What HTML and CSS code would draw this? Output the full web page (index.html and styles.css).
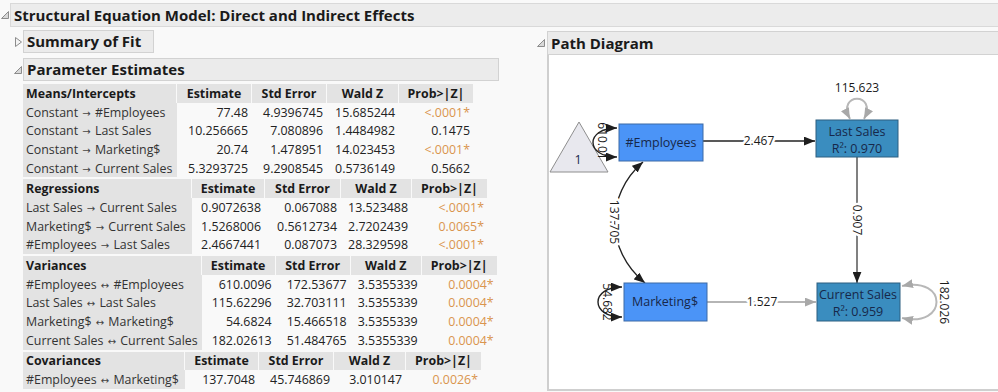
FILE: index.html
```html
<!DOCTYPE html>
<html lang="en">
<head>
  <meta charset="UTF-8" />
  <title>Structural Equation Model</title>
  <link rel="stylesheet" href="styles.css">
</head>
<body>
  <div class="report">
    <!-- Report title -->
    <div class="title-row">
      <span class="disc"><svg width="8" height="8" viewBox="0 0 8 8"><polygon points="7.5,0.5 7.5,7.5 0.5,7.5" class="icon-open"/></svg></span>
      <div class="title-bar">Structural Equation Model: Direct and Indirect Effects</div>
    </div>

    <div class="cols">
      <!-- Left side: fit summary and estimates -->
      <div class="left">
        <div class="outline-row">
          <span class="disc"><svg width="7" height="10" viewBox="0 0 7 10"><polygon points="0.5,0.5 6.5,5 0.5,9.5" class="icon-closed"/></svg></span>
          <div class="outline-head summary">Summary of Fit</div>
        </div>

        <div class="outline-row gap-top">
          <span class="disc"><svg width="8" height="8" viewBox="0 0 8 8"><polygon points="7.5,0.5 7.5,7.5 0.5,7.5" class="icon-open"/></svg></span>
          <div class="outline-head estimates">Parameter Estimates</div>
        </div>

        <div class="tables">
          <table class="est means">
            <colgroup><col><col><col><col><col></colgroup>
            <tr><th>Means/Intercepts</th><th>Estimate</th><th>Std Error</th><th>Wald Z</th><th>Prob&gt;|Z|</th></tr>
            <tr><td class="label">Constant <span class="arr">→</span> #Employees</td><td>77.48</td><td>4.9396745</td><td>15.685244</td><td class="sig">&lt;.0001*</td></tr>
            <tr><td class="label">Constant <span class="arr">→</span> Last Sales</td><td>10.256665</td><td>7.080896</td><td>1.4484982</td><td>0.1475</td></tr>
            <tr><td class="label">Constant <span class="arr">→</span> Marketing$</td><td>20.74</td><td>1.478951</td><td>14.023453</td><td class="sig">&lt;.0001*</td></tr>
            <tr><td class="label">Constant <span class="arr">→</span> Current Sales</td><td>5.3293725</td><td>9.2908545</td><td>0.5736149</td><td>0.5662</td></tr>
          </table>

          <table class="est regress">
            <colgroup><col><col><col><col><col></colgroup>
            <tr><th>Regressions</th><th>Estimate</th><th>Std Error</th><th>Wald Z</th><th>Prob&gt;|Z|</th></tr>
            <tr><td class="label">Last Sales <span class="arr">→</span> Current Sales</td><td>0.9072638</td><td>0.067088</td><td>13.523488</td><td class="sig">&lt;.0001*</td></tr>
            <tr><td class="label">Marketing$ <span class="arr">→</span> Current Sales</td><td>1.5268006</td><td>0.5612734</td><td>2.7202439</td><td class="sig">0.0065*</td></tr>
            <tr><td class="label">#Employees <span class="arr">→</span> Last Sales</td><td>2.4667441</td><td>0.087073</td><td>28.329598</td><td class="sig">&lt;.0001*</td></tr>
          </table>

          <table class="est variances">
            <colgroup><col><col><col><col><col></colgroup>
            <tr><th>Variances</th><th>Estimate</th><th>Std Error</th><th>Wald Z</th><th>Prob&gt;|Z|</th></tr>
            <tr><td class="label">#Employees <span class="arr">↔</span> #Employees</td><td>610.0096</td><td>172.53677</td><td>3.5355339</td><td class="sig">0.0004*</td></tr>
            <tr><td class="label">Last Sales <span class="arr">↔</span> Last Sales</td><td>115.62296</td><td>32.703111</td><td>3.5355339</td><td class="sig">0.0004*</td></tr>
            <tr><td class="label">Marketing$ <span class="arr">↔</span> Marketing$</td><td>54.6824</td><td>15.466518</td><td>3.5355339</td><td class="sig">0.0004*</td></tr>
            <tr><td class="label">Current Sales <span class="arr">↔</span> Current Sales</td><td>182.02613</td><td>51.484765</td><td>3.5355339</td><td class="sig">0.0004*</td></tr>
          </table>

          <table class="est covar">
            <colgroup><col><col><col><col><col></colgroup>
            <tr><th>Covariances</th><th>Estimate</th><th>Std Error</th><th>Wald Z</th><th>Prob&gt;|Z|</th></tr>
            <tr><td class="label">#Employees <span class="arr">↔</span> Marketing$</td><td>137.7048</td><td>45.746869</td><td>3.010147</td><td class="sig">0.0026*</td></tr>
          </table>
        </div>
      </div>

      <!-- Right side: path diagram -->
      <div class="right">
        <div class="outline-row">
          <span class="disc wide"><svg width="8" height="8" viewBox="0 0 8 8"><polygon points="7.5,0.5 7.5,7.5 0.5,7.5" class="icon-open"/></svg></span>
          <div class="outline-head diagram-head">Path Diagram</div>
        </div>
        <div class="diagram">
          <svg width="451" height="334" viewBox="547 55 451 334">
            <defs>
              <marker id="arrow" viewBox="0 0 10 8" refX="10" refY="4" markerWidth="11" markerHeight="9" markerUnits="userSpaceOnUse" orient="auto-start-reverse">
                <path d="M0,0 L10,4 L0,8 z" fill="#1e1e1e"/>
              </marker>
              <marker id="arrow-grey" viewBox="0 0 10 8" refX="10" refY="4" markerWidth="11" markerHeight="9" markerUnits="userSpaceOnUse" orient="auto-start-reverse">
                <path d="M0,0 L10,4 L0,8 z" fill="#a8a8a8"/>
              </marker>
            </defs>

            <!-- constant -->
            <polygon class="const" points="579,122 550,172 608,172"/>
            <text class="node-text" x="578" y="164">1</text>

            <!-- edges -->
            <path class="edge" d="M617,128 C585,128 585,157 617,157" marker-start="url(#arrow)" marker-end="url(#arrow)"/>
            <text class="edge-text" transform="translate(602,141) rotate(90)">610.01</text>

            <path class="edge" d="M703,141 L815,141" marker-end="url(#arrow)"/>
            <text class="edge-text halo" x="759" y="145">2.467</text>

            <path class="loop" d="M850,119 C836,92 878,92 864,119" marker-start="url(#arrow-grey)" marker-end="url(#arrow-grey)"/>
            <text class="edge-text" x="857" y="92">115.623</text>

            <path class="edge dim" d="M857,157 L857,283" marker-end="url(#arrow)"/>
            <text class="edge-text halo" transform="translate(857,220) rotate(90)">0.907</text>

            <path class="edge" d="M643,162 C605,195 605,250 645,283" marker-start="url(#arrow)" marker-end="url(#arrow)"/>
            <text class="edge-text halo" transform="translate(614,222) rotate(90)">137.705</text>

            <path class="edge" d="M622,287 C590,287 590,317 622,317" marker-start="url(#arrow)" marker-end="url(#arrow)"/>
            <text class="edge-text" transform="translate(607,302) rotate(90)">54.682</text>

            <path class="edge grey" d="M707,302 L816,302" marker-end="url(#arrow-grey)"/>
            <text class="edge-text halo" x="762" y="306">1.527</text>

            <path class="loop" d="M902,286 C948,276 948,328 902,318" marker-start="url(#arrow-grey)" marker-end="url(#arrow-grey)"/>
            <text class="edge-text" transform="translate(944,302) rotate(90)">182.026</text>

            <!-- nodes -->
            <rect class="node-x" x="619" y="124" width="84" height="37"/>
            <text class="node-text" x="661" y="147">#Employees</text>

            <rect class="node-x" x="624" y="283" width="83" height="38"/>
            <text class="node-text" x="665" y="306">Marketing$</text>

            <rect class="node-y" x="816" y="120" width="82" height="37"/>
            <text class="node-text" x="857" y="136">Last Sales</text>
            <text class="node-text" x="857" y="153">R²: 0.970</text>

            <rect class="node-y" x="817" y="283" width="83" height="38"/>
            <text class="node-text" x="858" y="299">Current Sales</text>
            <text class="node-text" x="858" y="316">R²: 0.959</text>
          </svg>
        </div>
      </div>
    </div>
  </div>
</body>
</html>
```

FILE: styles.css
```css
body {
  margin: 0;
  background-color: #f9f9f9;
  font-family: "Open Sans", Arial, sans-serif;
  color: #1a1a1a;
}

.report {
  width: 998px;
  overflow: hidden;
}

/* disclosure icons */
.disc {
  display: flex;
  justify-content: center;
  align-items: center;
  flex: none;
  width: 10px;
}

.disc.wide {
  width: 17px;
  justify-content: flex-end;
  padding-right: 2px;
  box-sizing: border-box;
}

.icon-open {
  fill: #d8d8d8;
  stroke: #8c8c8c;
  stroke-width: 1;
}

.icon-closed {
  fill: #f4f4f4;
  stroke: #8c8c8c;
  stroke-width: 1;
}

.title-row {
  display: flex;
  align-items: center;
  margin-top: 3px;
}

.title-bar {
  flex: 1;
  height: 22px;
  line-height: 22px;
  padding-left: 3px;
  background-color: #ececec;
  border: 1px solid #d9d9d9;
  border-right: none;
  font-size: 15px;
  font-weight: bold;
}

.cols {
  display: flex;
  margin-top: 3px;
}

.left {
  width: 517px;
  padding-left: 13px;
  flex: none;
}

.right {
  flex: 1;
  padding-top: 1px;
}

.outline-row {
  display: flex;
  align-items: center;
}

.gap-top {
  margin-top: 5px;
}

.outline-head {
  height: 21px;
  line-height: 21px;
  padding-left: 3px;
  background-color: #ebebeb;
  border: 1px solid #d2d2d2;
  font-size: 15px;
  font-weight: bold;
}

.summary {
  width: 126px;
}

.estimates {
  width: 471px;
}

.diagram-head {
  flex: 1;
  height: 22px;
  line-height: 22px;
  border-right: none;
}

/* estimate tables */
.tables {
  margin-top: 3px;
  margin-left: 10px;
}

table.est {
  border-collapse: separate;
  border-spacing: 0;
  table-layout: fixed;
  font-size: 12.4px;
  margin-bottom: 2px;
}

.est th {
  height: 18.7px;
  padding: 0;
  background-color: #e3e3e3;
  border-right: 1px solid #f9f9f9;
  font-weight: bold;
  text-align: center;
  white-space: nowrap;
}

.est th:first-child {
  text-align: left;
  padding-left: 3px;
}

.est td {
  height: 18.7px;
  padding: 0 4px 0 0;
  text-align: right;
  white-space: nowrap;
  color: #222;
}

.est td.label {
  background-color: #e3e3e3;
  text-align: left;
  padding-left: 3px;
  color: #333;
  overflow: hidden;
}

.est td.sig {
  color: #d9954e;
}

.arr {
  font-family: "DejaVu Sans", sans-serif;
  font-size: 10px;
  color: #444;
  margin: 0 1px;
}

.means col:nth-child(1) { width: 154px; }
.means col:nth-child(2) { width: 75px; }
.means col:nth-child(3) { width: 75px; }
.means col:nth-child(4) { width: 72px; }
.means col:nth-child(5) { width: 75px; }

.regress col:nth-child(1) { width: 169px; }
.regress col:nth-child(2) { width: 73px; }
.regress col:nth-child(3) { width: 76px; }
.regress col:nth-child(4) { width: 71px; }
.regress col:nth-child(5) { width: 76px; }

.variances col:nth-child(1) { width: 178px; }
.variances col:nth-child(2) { width: 74px; }
.variances col:nth-child(3) { width: 75px; }
.variances col:nth-child(4) { width: 71px; }
.variances col:nth-child(5) { width: 76px; }

.covar col:nth-child(1) { width: 162px; }
.covar col:nth-child(2) { width: 74px; }
.covar col:nth-child(3) { width: 75px; }
.covar col:nth-child(4) { width: 72px; }
.covar col:nth-child(5) { width: 76px; }

/* path diagram */
.diagram {
  margin-left: 17px;
  height: 334px;
  background-color: #fff;
  border-left: 2px solid #cfcfcf;
  border-bottom: 2px solid #cfcfcf;
}

.diagram svg {
  display: block;
  margin-left: -2px;
}

.const {
  fill: #e8e8ee;
  stroke: #8e8e8e;
  stroke-width: 1;
}

.node-x {
  fill: #4b94f7;
  stroke: #3c6aa6;
  stroke-width: 1;
}

.node-y {
  fill: #3a8dbf;
  stroke: #2d5f80;
  stroke-width: 1;
}

.node-text {
  font-family: "Open Sans", Arial, sans-serif;
  font-size: 12.5px;
  fill: #17284a;
  text-anchor: middle;
}

.edge {
  fill: none;
  stroke: #222;
  stroke-width: 1.4;
}

.edge.dim {
  stroke: #4a4a4a;
}

.edge.grey {
  stroke: #9c9c9c;
}

.loop {
  fill: none;
  stroke: #b8b8b8;
  stroke-width: 2;
}

.edge-text {
  font-family: "Open Sans", Arial, sans-serif;
  font-size: 12px;
  fill: #1a1a1a;
  text-anchor: middle;
  dominant-baseline: central;
}

.edge-text[x] {
  dominant-baseline: auto;
}

.halo {
  stroke: #fff;
  stroke-width: 5px;
  paint-order: stroke;
}
```
